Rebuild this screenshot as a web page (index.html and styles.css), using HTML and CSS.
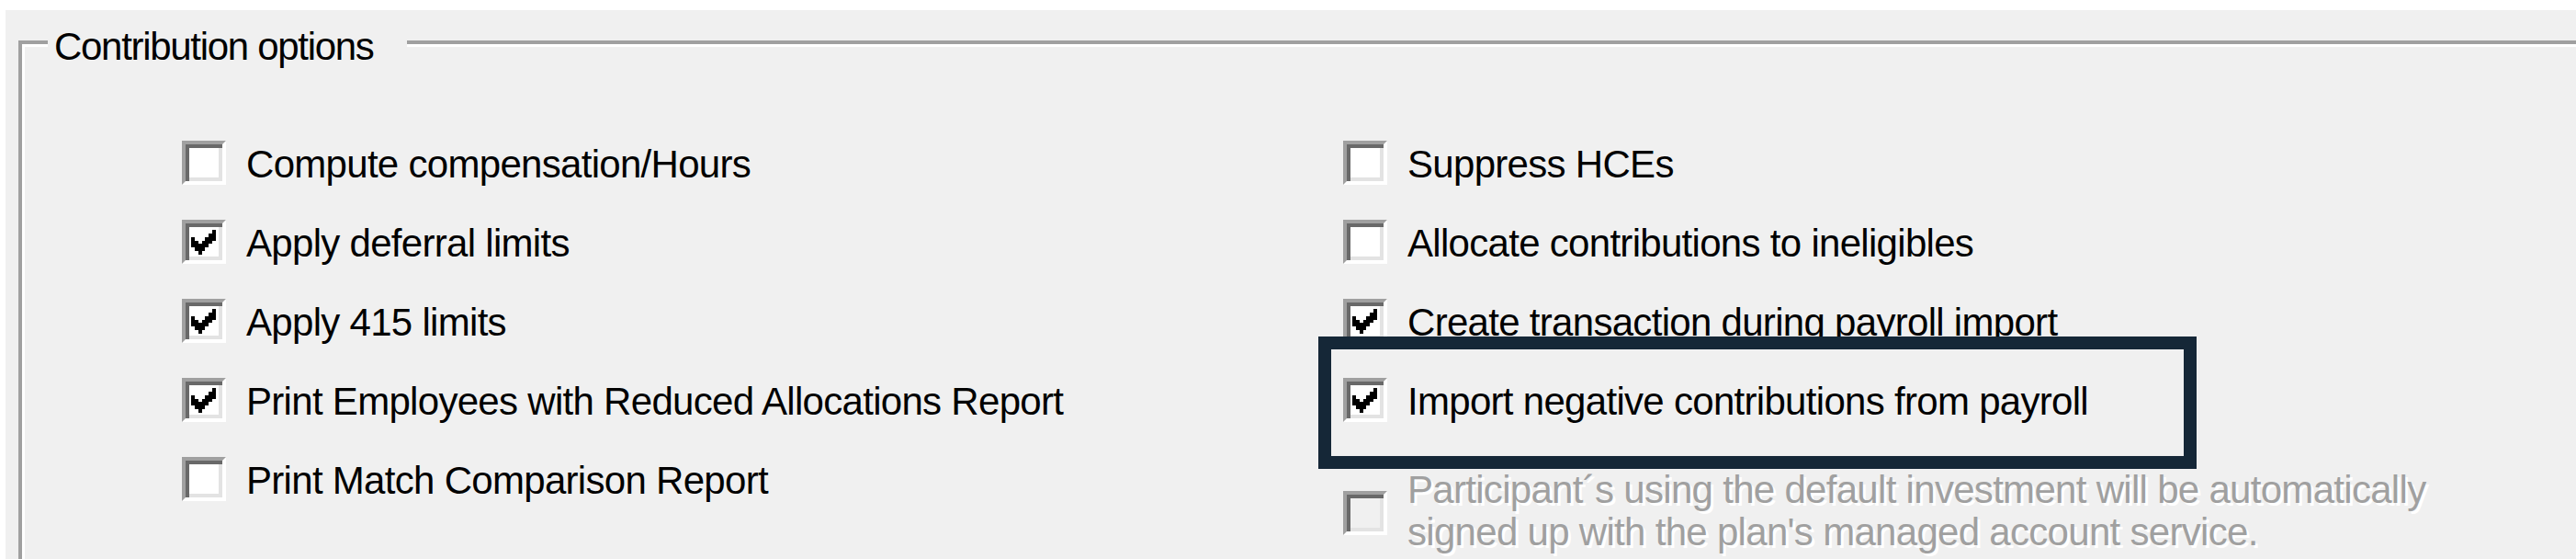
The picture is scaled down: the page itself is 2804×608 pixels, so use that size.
FILE: index.html
```html
<!DOCTYPE html>
<html lang="en">
<head>
<meta charset="utf-8">
<title>Contribution options</title>
<link rel="stylesheet" href="styles.css">
</head>
<body>
<div class="window">
  <div class="group">
    <div class="group-title">Contribution options</div>
    <div class="columns">
      <div class="col">
        <div class="option"><span class="box"></span><span class="label">Compute compensation/Hours</span></div>
        <div class="option"><span class="box"><svg class="check" viewBox="0 0 7 7"><path d="M6 0H7V3H6V4H5V5H4V6H3V7H2V6H1V5H0V2H1V3H2V4H3V3H4V2H5V1H6Z"/></svg></span><span class="label">Apply deferral limits</span></div>
        <div class="option"><span class="box"><svg class="check" viewBox="0 0 7 7"><path d="M6 0H7V3H6V4H5V5H4V6H3V7H2V6H1V5H0V2H1V3H2V4H3V3H4V2H5V1H6Z"/></svg></span><span class="label">Apply 415 limits</span></div>
        <div class="option"><span class="box"><svg class="check" viewBox="0 0 7 7"><path d="M6 0H7V3H6V4H5V5H4V6H3V7H2V6H1V5H0V2H1V3H2V4H3V3H4V2H5V1H6Z"/></svg></span><span class="label">Print Employees with Reduced Allocations Report</span></div>
        <div class="option"><span class="box"></span><span class="label">Print Match Comparison Report</span></div>
      </div>
      <div class="col">
        <div class="option"><span class="box"></span><span class="label">Suppress HCEs</span></div>
        <div class="option"><span class="box"></span><span class="label">Allocate contributions to ineligibles</span></div>
        <div class="option"><span class="box"><svg class="check" viewBox="0 0 7 7"><path d="M6 0H7V3H6V4H5V5H4V6H3V7H2V6H1V5H0V2H1V3H2V4H3V3H4V2H5V1H6Z"/></svg></span><span class="label">Create transaction during payroll import</span></div>
        <div class="option highlighted"><span class="box"><svg class="check" viewBox="0 0 7 7"><path d="M6 0H7V3H6V4H5V5H4V6H3V7H2V6H1V5H0V2H1V3H2V4H3V3H4V2H5V1H6Z"/></svg></span><span class="label">Import negative contributions from payroll</span><span class="highlight"></span></div>
        <div class="option multi disabled"><span class="box"></span><span class="label">Participant´s using the default investment will be automatically<br>signed up with the plan's managed account service.</span></div>
      </div>
    </div>
  </div>
</div>
</body>
</html>
```
FILE: styles.css
```css
html, body {
  margin: 0;
  padding: 0;
  background: #ffffff;
  overflow: hidden;
}

body {
  width: 2804px;
  height: 608px;
  font-family: "Liberation Sans", Arial, sans-serif;
  font-size: 42px;
  letter-spacing: -0.7px;
  color: #000000;
}

.window {
  margin: 11px 0 0 6px;
  height: 597px;
  background: #f0f0f0;
  overflow: hidden;
}

.group {
  margin: 33px 0 0 14px;
  min-height: 700px;
  border-top: 4px solid #a0a0a0;
  border-left: 4px solid #a0a0a0;
  box-shadow: inset 3px 3px 0 #ffffff;
}

.group-title {
  width: fit-content;
  margin: -21px 0 0 28px;
  padding: 0 36px 0 7px;
  line-height: 48px;
  letter-spacing: -1.3px;
  background: #f0f0f0;
  white-space: nowrap;
}

.columns {
  display: grid;
  grid-template-columns: 1264px 1fr;
  margin-top: 78px;
  padding-left: 174px;
}

.col {
  display: flex;
  flex-direction: column;
  gap: 38px;
}

.option {
  display: flex;
  align-items: center;
  gap: 22px;
  height: 48px;
  white-space: nowrap;
}

.label {
  line-height: 48px;
  padding-top: 4px;
}

.box {
  flex: none;
  box-sizing: border-box;
  width: 48px;
  height: 48px;
  border: 4px solid;
  border-color: #a0a0a0 #ffffff #ffffff #a0a0a0;
  background: #ffffff;
  box-shadow: inset 4px 4px 0 #696969, inset -4px -4px 0 #e3e3e3;
}

.check {
  display: block;
  width: 27px;
  height: 27px;
  margin: 7px 0 0 6px;
  fill: #000000;
  shape-rendering: crispEdges;
}

.highlighted {
  position: relative;
}

.highlight {
  position: absolute;
  left: -27px;
  top: -45px;
  box-sizing: border-box;
  width: 956px;
  height: 144px;
  border: 14px solid #152737;
  pointer-events: none;
}

.multi {
  align-items: flex-start;
  height: auto;
  margin-top: 13px;
}

.multi .box {
  margin-top: 24px;
}

.multi .label {
  line-height: 46px;
  padding-top: 0;
}

.disabled .box {
  background: #f0f0f0;
}

.disabled .label {
  color: #a0a0a0;
  text-shadow: 3px 3px 0 #ffffff;
}
```
